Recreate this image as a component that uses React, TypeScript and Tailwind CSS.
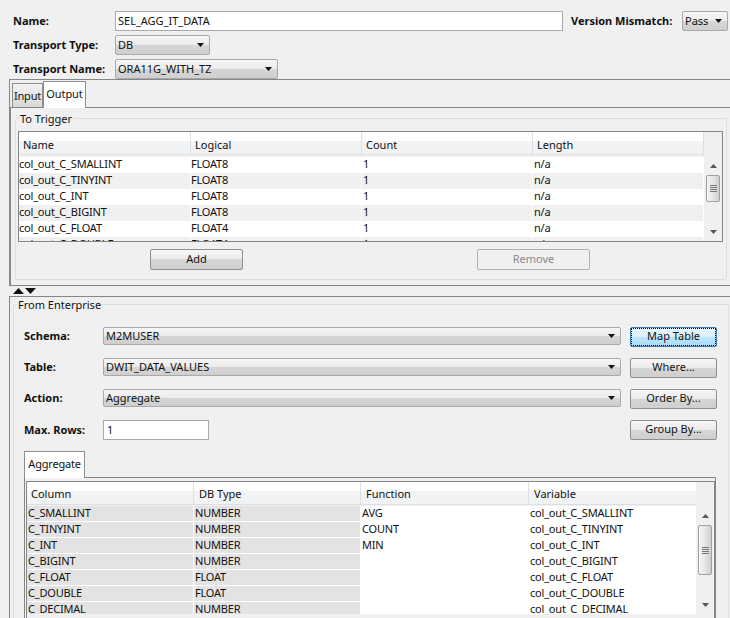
const FONT = "font-['Noto_Sans','Liberation_Sans',sans-serif] text-[11px] leading-[14px] text-[#111]";
const GLOSS = "bg-[linear-gradient(#f6f6f6_0%,#ebebeb_50%,#d6d6d6_50%,#cfcfcf_100%)]";

const triggerRows = ["col_out_C_SMALLINT", "col_out_C_TINYINT", "col_out_C_INT", "col_out_C_BIGINT", "col_out_C_FLOAT", "col_out_C_DOUBLE"];
const triggerLogical = ["FLOAT8", "FLOAT8", "FLOAT8", "FLOAT8", "FLOAT4", "FLOAT4"];

const aggRows = [
  ["C_SMALLINT", "NUMBER", "AVG", "col_out_C_SMALLINT"],
  ["C_TINYINT", "NUMBER", "COUNT", "col_out_C_TINYINT"],
  ["C_INT", "NUMBER", "MIN", "col_out_C_INT"],
  ["C_BIGINT", "NUMBER", "", "col_out_C_BIGINT"],
  ["C_FLOAT", "FLOAT", "", "col_out_C_FLOAT"],
  ["C_DOUBLE", "FLOAT", "", "col_out_C_DOUBLE"],
  ["C_DECIMAL", "NUMBER", "", "col_out_C_DECIMAL"],
];

function Caret() {
  return (
    <svg width="7" height="4" viewBox="0 0 7 4" className="shrink-0">
      <path d="M0 0h7L3.5 4z" fill="#111" />
    </svg>
  );
}

function Select({ value, className }: { value: string; className: string }) {
  return (
    <div className={`flex items-center justify-between rounded-[2px] border border-[#a9a9a9] pl-[2px] pr-[5px] ${GLOSS} ${className}`}>
      <span>{value}</span>
      <Caret />
    </div>
  );
}

function Button({ label, className = "" }: { label: string; className?: string }) {
  return (
    <div className={`flex items-center justify-center rounded-[2px] border border-[#8f8f8f] pb-[2px] ${GLOSS} ${className}`}>
      {label}
    </div>
  );
}

function Scrollbar({ thumbTop, thumbHeight, className }: { thumbTop: number; thumbHeight: number; className: string }) {
  return (
    <div className={`flex flex-col items-center ${className}`}>
      <svg width="7" height="4" viewBox="0 0 7 4" className="mt-[8px] shrink-0">
        <path d="M3.5 0L7 4H0z" fill="#555" />
      </svg>
      <div
        className="flex w-[14px] shrink-0 flex-col items-center justify-center gap-[1px] rounded-[2px] border border-[#a0a0a0] bg-[linear-gradient(90deg,#f5f5f5,#e2e2e2_60%,#cfcfcf)]"
        style={{ marginTop: thumbTop, height: thumbHeight }}
      >
        <div className="h-px w-[7px] bg-[#777]" />
        <div className="h-px w-[7px] bg-[#777]" />
        <div className="h-px w-[7px] bg-[#777]" />
        <div className="h-px w-[7px] bg-[#777]" />
      </div>
      <svg width="7" height="4" viewBox="0 0 7 4" className="mb-[7px] mt-auto shrink-0">
        <path d="M0 0h7L3.5 4z" fill="#555" />
      </svg>
    </div>
  );
}

function HeaderCell({ label, className }: { label: string; className: string }) {
  return (
    <div className={`flex h-[23px] items-center border-b border-r border-b-[#dcdfe3] border-r-[#dcdfe3] bg-[linear-gradient(#fff_0%,#fff_40%,#f3f4f6_40%,#f1f2f4_100%)] ${className}`}>
      {label}
    </div>
  );
}

export default function App() {
  return (
    <div className={`h-[618px] w-[730px] overflow-hidden bg-[#f0f0f0] pt-[11px] ${FONT}`}>
      {/* header form */}
      <div className="pl-[13px]">
        <div className="flex h-[20px] items-center">
          <span className="w-[102px] font-bold">Name:</span>
          <div className="flex h-[20px] w-[448px] items-center border border-[#a9a9a9] bg-white pl-[2px]">SEL_AGG_IT_DATA</div>
          <span className="ml-[8px] w-[111px] font-bold">Version Mismatch:</span>
          <Select value="Pass" className="h-[20px] w-[46px]" />
        </div>
        <div className="mt-[4px] flex h-[20px] items-center">
          <span className="w-[102px] font-bold">Transport Type:</span>
          <Select value="DB" className="h-[20px] w-[95px]" />
        </div>
        <div className="mt-[4px] flex h-[20px] items-center">
          <span className="w-[102px] font-bold">Transport Name:</span>
          <Select value="ORA11G_WITH_TZ" className="h-[20px] w-[163px]" />
        </div>
      </div>

      {/* To Trigger pane */}
      <div className="ml-[9px] h-[207px] border-b border-l border-t border-[#868686]">
        <div className="flex h-[27px] items-end pl-[2px]">
          <div className="flex h-[24px] w-[31px] items-center justify-center border border-b-0 border-[#8e8e8e] bg-[linear-gradient(#f2f2f2,#d8d8d8)] tracking-[-0.2px]">Input</div>
          <div className="relative z-10 -mb-px flex h-[27px] w-[43px] items-center justify-center border border-b-0 border-[#8e8e8e] bg-white pb-[2px] tracking-[-0.1px]">Output</div>
        </div>
        <div className="h-[178px] border-l border-t border-[#868686] pl-[4px] pr-[2px]">
          <fieldset className="mt-[4px] h-[168px] w-[712px] rounded-[2px] border border-[#d5dfe5] pl-[2px] pr-[2px]">
            <legend className="ml-px px-[1px] leading-[13px]">To Trigger</legend>
            <div className="mt-[6px] flex h-[111px] w-[705px] border border-[#868686] bg-[#f0f0f0]">
              <div className="w-[685px] overflow-hidden">
                <div className="grid grid-cols-[172px_171px_171px_171px]">
                  <HeaderCell label="Name" className="pl-[4px] pt-[4px]" />
                  <HeaderCell label="Logical" className="pl-[4px] pt-[4px]" />
                  <HeaderCell label="Count" className="pl-[4px] pt-[4px]" />
                  <HeaderCell label="Length" className="pl-[4px] pt-[4px]" />
                </div>
                <div className="mt-[2px] grid grid-cols-[172px_171px_171px_171px]">
                  {triggerRows.map((name, i) => {
                    const bg = i % 2 === 0 ? "bg-white" : "bg-[#f0f0f0]";
                    return [name, triggerLogical[i], "1", "n/a"].map((text, j) => (
                      <div key={`${i}-${j}`} className={`h-[16px] truncate border-r border-white tracking-[-0.2px] ${j < 2 ? "" : "pl-px"} ${bg}`}>
                        {text}
                      </div>
                    ));
                  })}
                </div>
              </div>
              <Scrollbar thumbTop={7} thumbHeight={27} className="w-[18px] pt-[24px]" />
            </div>
            <div className="mt-[7px] flex">
              <Button label="Add" className="ml-[132px] h-[21px] w-[93px]" />
              <div className="ml-[234px] flex h-[21px] w-[113px] items-center justify-center rounded-[2px] border border-[#adb2b5] bg-[#f0f0f0] pb-[2px] text-[#8a8a8a]">Remove</div>
            </div>
          </fieldset>
        </div>
      </div>

      {/* splitter */}
      <div className="flex h-[10px] items-center gap-px pl-[13px]">
        <svg width="11" height="6" viewBox="0 0 11 6"><path d="M5.5 0L11 6H0z" fill="#111" /></svg>
        <svg width="11" height="6" viewBox="0 0 11 6"><path d="M0 0h11L5.5 6z" fill="#111" /></svg>
      </div>

      {/* From Enterprise pane */}
      <div className="ml-[9px] h-[322px] border-l border-t border-[#868686] pl-[3px] pr-px">
        <fieldset className="mt-[1px] h-[330px] w-[716px] rounded-[2px] border border-[#d5dfe5] pl-[10px]">
          <legend className="ml-[-7px] px-[1px] leading-[13px]">From Enterprise</legend>
          <div className="mt-[16px] flex flex-col gap-[11px]">
            <div className="flex h-[20px] items-start">
              <span className="w-[79px] font-bold leading-[18px]">Schema:</span>
              <Select value="M2MUSER" className="h-[18px] w-[518px]" />
              <div className="ml-[9px] flex h-[20px] w-[87px] items-center justify-center rounded-[2px] border border-[#3c7fb1] bg-[linear-gradient(#e8f5fc_0%,#d9f0fc_50%,#bee6fd_50%,#a7d9f5_100%)] pb-[2px] outline-1 -outline-offset-2 outline-dotted outline-black">Map Table</div>
            </div>
            <div className="flex h-[20px] items-start">
              <span className="w-[79px] font-bold leading-[18px]">Table:</span>
              <Select value="DWIT_DATA_VALUES" className="h-[18px] w-[518px]" />
              <Button label="Where..." className="ml-[9px] h-[20px] w-[87px]" />
            </div>
            <div className="flex h-[20px] items-start">
              <span className="w-[79px] font-bold leading-[18px]">Action:</span>
              <Select value="Aggregate" className="h-[18px] w-[518px]" />
              <Button label="Order By..." className="ml-[9px] h-[20px] w-[87px]" />
            </div>
            <div className="flex h-[20px] items-center">
              <span className="w-[79px] font-bold">Max. Rows:</span>
              <div className="flex h-[20px] w-[106px] items-center border border-[#a9a9a9] bg-white pl-[3px]">1</div>
              <Button label="Group By..." className="ml-[421px] h-[20px] w-[87px]" />
            </div>
          </div>

          <div className="mt-[10px] flex h-[27px] items-end">
            <div className="relative z-10 -mb-px flex h-[27px] w-[61px] items-center justify-center border border-b-0 border-[#8e8e8e] bg-white pb-[3px] tracking-[-0.2px]">Aggregate</div>
          </div>
          <div className="h-[150px] w-[692px] border-l border-r border-t border-[#868686] pl-[1px] pr-px pt-[3px]">
            <div className="flex h-[200px] w-[689px] border border-[#868686] bg-[#f0f0f0]">
              <div className="h-[132px] w-[670px] overflow-hidden">
                <div className="grid grid-cols-[167px_167px_168px_168px]">
                  <HeaderCell label="Column" className="pl-[4px] pt-[2px]" />
                  <HeaderCell label="DB Type" className="pl-[5px] pt-[2px]" />
                  <HeaderCell label="Function" className="pl-[5px] pt-[2px]" />
                  <HeaderCell label="Variable" className="pl-[5px] pt-[2px]" />
                </div>
                <div className="mt-[1px] grid grid-cols-[167px_167px_168px_168px] bg-white">
                  {aggRows.map((row, i) =>
                    row.map((text, j) => (
                      <div key={`${i}-${j}`} className={`h-[16px] truncate border-b border-r border-white pl-px tracking-[-0.2px] ${j < 2 ? "bg-[#e3e3e3]" : "bg-white"}`}>
                        {text}
                      </div>
                    ))
                  )}
                </div>
              </div>
              <Scrollbar thumbTop={7} thumbHeight={50} className="h-[132px] w-[18px] pt-[24px]" />
            </div>
          </div>
        </fieldset>
      </div>
    </div>
  );
}
